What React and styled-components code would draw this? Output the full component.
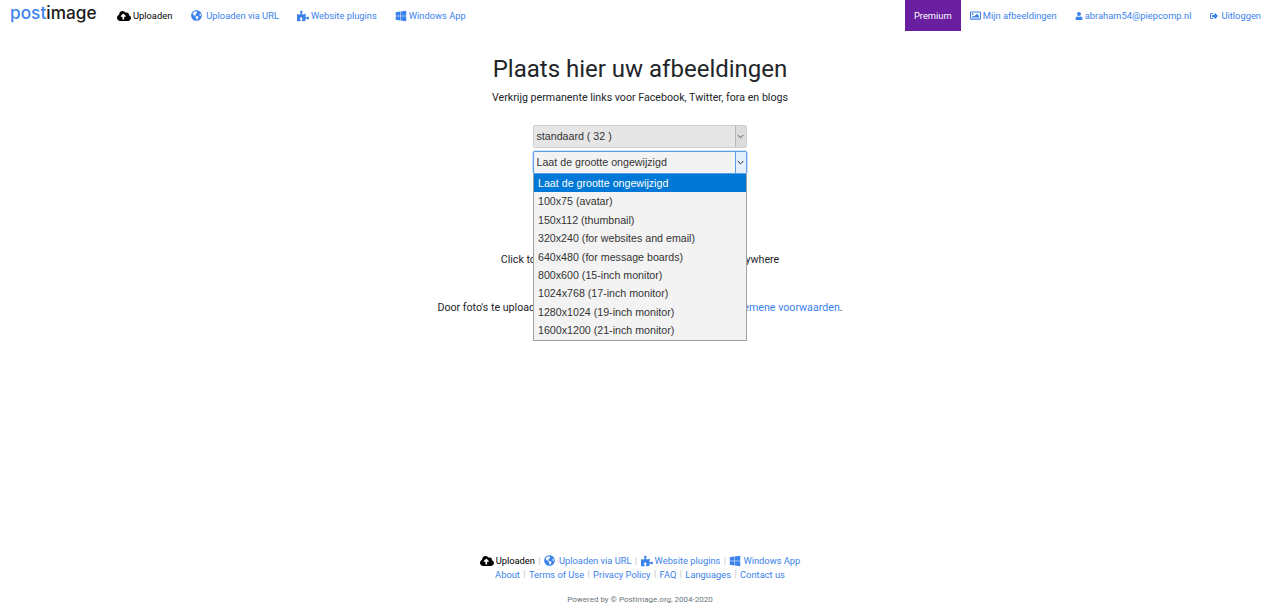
import React from "react";
import styled, { createGlobalStyle } from "styled-components";
import { FaCloudUploadAlt, FaGlobeAmericas, FaPuzzlePiece, FaWindows, FaRegImage, FaUser, FaSignOutAlt } from "react-icons/fa";

const Global = createGlobalStyle`
  html, body { margin: 0; padding: 0; background: #fff; }
  body { font-family: Roboto, "Liberation Sans", sans-serif; color: #212529; }
  #root { height: 611px; overflow: hidden; }
`;
const Page = styled.div`
  height: 611px;
  display: flex;
  flex-direction: column;
`;
const Nav = styled.nav`
  height: 31px;
  display: flex;
  justify-content: space-between;
  flex: none;
`;
const NavGroup = styled.div`
  display: flex;
  align-items: center;
`;
const Logo = styled.a`
  width: 117px;
  padding-left: 10px;
  box-sizing: border-box;
  font-family: Inter, sans-serif;
  font-size: 17.2px;
  font-weight: 500;
  line-height: 28px;
  letter-spacing: 0.05px;
  color: #1b1b1b;
  white-space: nowrap;
  position: relative;
  top: -2.5px;
  span { color: #3d84ee; }
`;
const NavLink = styled.a`
  display: flex;
  align-items: center;
  gap: ${p => p.$gap ?? 2}px;
  font-size: 9.33px;
  margin-right: ${p => p.$mr ?? 0}px;
  color: ${p => (p.$active ? "#000" : "#3b82ec")};
  white-space: nowrap;
  svg { flex: none; }
`;
const Premium = styled.a`
  width: 56px;
  height: 31px;
  margin-right: 9px;
  background: #6a1fa0;
  color: #fff;
  font-size: 9.33px;
  display: flex;
  align-items: center;
  justify-content: center;
`;
const Main = styled.main`
  flex: 1;
  display: flex;
  flex-direction: column;
  align-items: center;
  padding-top: 22px;
  position: relative;
`;
const Title = styled.h1`
  margin: 0;
  font-size: 24px;
  font-weight: 400;
  line-height: 32px;
  color: #212529;
`;
const Sub = styled.p`
  margin: 5px 0 0;
  font-size: 10.67px;
  line-height: 15px;
`;
const SelectWrap = styled.div`
  position: relative;
  width: 214px;
  margin-right: 1px;
  margin-top: ${p => p.$mt}px;
`;
const SelectBox = styled.div`
  height: 23px;
  box-sizing: border-box;
  display: flex;
  border: 1px solid ${p => (p.$focus ? "#5b9fe8" : "#cfcfcf")};
  border-radius: 2px;
  background: ${p => (p.$focus ? "#f3f3f3" : "#e6e6e6")};
  font-family: "Liberation Sans", Arial, sans-serif;
  font-size: 10.67px;
  color: #333;
  box-shadow: ${p => (p.$focus ? "0 0 0 0.5px #9cc4f0" : "none")};
`;
const SelectText = styled.span`
  flex: 1;
  padding-left: 3px;
  line-height: 21px;
`;
const Arrow = styled.span`
  width: 10px;
  display: flex;
  align-items: center;
  justify-content: center;
  border-left: 1px solid ${p => (p.$focus ? "#5b9fe8" : "#b8b8b8")};
  background: ${p => (p.$focus ? "#e3f0fc" : "#dcdcdc")};
`;
const List = styled.ul`
  position: absolute;
  z-index: 2;
  left: 0;
  top: 23px;
  width: 214px;
  box-sizing: border-box;
  margin: 0;
  padding: 0;
  list-style: none;
  border: 1px solid #a0a0a0;
  border-top: none;
  background: #f3f3f3;
  font-family: "Liberation Sans", Arial, sans-serif;
  font-size: 10.67px;
  color: #333;
`;
const Option = styled.li`
  height: 18.4px;
  line-height: 18.4px;
  padding-left: 4.5px;
  background: ${p => (p.$selected ? "#0078d7" : "transparent")};
  color: ${p => (p.$selected ? "#fff" : "#333")};
`;
const Hint = styled.p`
  margin: ${p => p.$mt}px 0 0;
  font-size: 10.67px;
  line-height: 15px;
  color: #212529;
  white-space: nowrap;
  a { color: #3b82ec; }
`;
const Footer = styled.footer`
  flex: none;
  height: 57px;
  display: flex;
  flex-direction: column;
  align-items: center;
  font-size: 9.33px;
`;
const FootRow = styled.div`
  display: flex;
  align-items: center;
  height: 13.5px;
`;
const Sep = styled.span`
  color: #c4c4c4;
  margin: 0 3.4px;
  font-size: 9px;
`;
const Powered = styled.p`
  margin: 13px 0 0;
  font-size: 8px;
  line-height: 12px;
  color: #6c757d;
`;
const Chev = ({ color = "#555" }) => (
  <svg width="7" height="5" viewBox="0 0 7 5"><path d="M.7 1 3.5 3.8 6.3 1" fill="none" stroke={color} strokeWidth="1" /></svg>
);
const options = ["Laat de grootte ongewijzigd", "100x75 (avatar)", "150x112 (thumbnail)", "320x240 (for websites and email)", "640x480 (for message boards)", "800x600 (15-inch monitor)", "1024x768 (17-inch monitor)", "1280x1024 (19-inch monitor)", "1600x1200 (21-inch monitor)"];

export default function App() {
  return (
    <Page>
      <Global />
      <Nav>
        <NavGroup>
          <Logo><span>post</span>image</Logo>
          <NavLink $active $mr={19} $gap={2}><FaCloudUploadAlt size={14} />Uploaden</NavLink>
          <NavLink $mr={18} $gap={4}><FaGlobeAmericas size={11} />Uploaden via URL</NavLink>
          <NavLink $mr={18} $gap={2}><FaPuzzlePiece size={12} />Website plugins</NavLink>
          <NavLink $gap={2}><FaWindows size={12} />Windows App</NavLink>
        </NavGroup>
        <NavGroup>
          <Premium>Premium</Premium>
          <NavLink $mr={18} $gap={2}><FaRegImage size={11} />Mijn afbeeldingen</NavLink>
          <NavLink $mr={19} $gap={2}><FaUser size={8} />abraham54@piepcomp.nl</NavLink>
          <NavLink $mr={19} $gap={3}><FaSignOutAlt size={8} />Uitloggen</NavLink>
        </NavGroup>
      </Nav>
      <Main>
        <Title>Plaats hier uw afbeeldingen</Title>
        <Sub>Verkrijg permanente links voor Facebook, Twitter, fora en blogs</Sub>
        <SelectWrap $mt={20}>
          <SelectBox><SelectText>standaard ( 32 )</SelectText><Arrow><Chev /></Arrow></SelectBox>
        </SelectWrap>
        <SelectWrap $mt={3}>
          <SelectBox $focus><SelectText>Laat de grootte ongewijzigd</SelectText><Arrow $focus><Chev color="#222" /></Arrow></SelectBox>
          <List>
            {options.map((o, i) => <Option key={o} $selected={i === 0}>{o}</Option>)}
          </List>
        </SelectWrap>
        <Hint $mt={78}>Click to choose images, or drag and drop images anywhere</Hint>
        <Hint $mt={33}>Door foto's te uploaden naar de site, gaat u akkoord met onze <a>algemene voorwaarden</a>.</Hint>
      </Main>
      <Footer>
        <FootRow>
          <NavLink $active $gap={2}><FaCloudUploadAlt size={14} />Uploaden</NavLink><Sep>|</Sep>
          <NavLink $gap={4}><FaGlobeAmericas size={11} />Uploaden via URL</NavLink><Sep>|</Sep>
          <NavLink $gap={2}><FaPuzzlePiece size={12} />Website plugins</NavLink><Sep>|</Sep>
          <NavLink $gap={2}><FaWindows size={12} />Windows App</NavLink>
        </FootRow>
        <FootRow>
          <NavLink>About</NavLink><Sep>|</Sep>
          <NavLink>Terms of Use</NavLink><Sep>|</Sep>
          <NavLink>Privacy Policy</NavLink><Sep>|</Sep>
          <NavLink>FAQ</NavLink><Sep>|</Sep>
          <NavLink>Languages</NavLink><Sep>|</Sep>
          <NavLink>Contact us</NavLink>
        </FootRow>
        <Powered>Powered by © Postimage.org, 2004-2020</Powered>
      </Footer>
    </Page>
  );
}
